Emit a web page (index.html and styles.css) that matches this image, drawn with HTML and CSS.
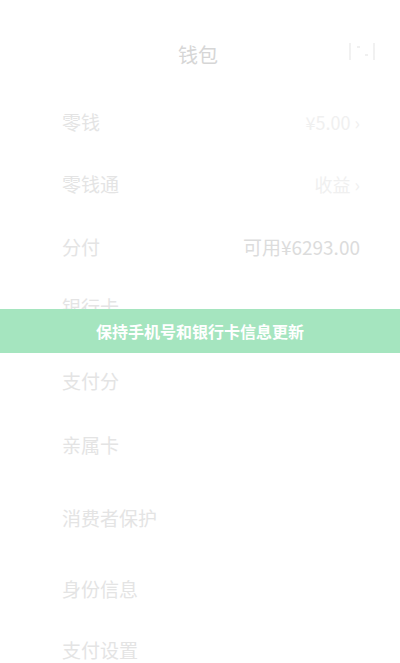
FILE: index.html
```html
<!DOCTYPE html>
<html lang="zh">
<head>
<meta charset="utf-8">
<link rel="stylesheet" href="styles.css">
</head>
<body>
<div class="page">
  <header class="topbar">
    <span class="title">钱包</span>
    <span class="more">
      <svg width="32" height="22" viewBox="0 0 32 22"><path d="M4 3v17M28 3v17M11 7h3M19 15h3" stroke="#ececec" stroke-width="1.4" fill="none"/></svg>
    </span>
  </header>
  <ul class="list">
    <li class="row r1"><span class="label">零钱</span><span class="value">¥5.00 ›</span></li>
    <li class="row r2"><span class="label">零钱通</span><span class="value">收益 ›</span></li>
    <li class="row r3"><span class="label">分付</span><span class="value strong">可用¥6293.00</span></li>
    <li class="row r4"><span class="label">银行卡</span></li>
    <li class="row r5"><span class="label">支付分</span></li>
    <li class="row r6"><span class="label">亲属卡</span></li>
    <li class="row r7"><span class="label">消费者保护</span></li>
    <li class="row r8"><span class="label">身份信息</span></li>
    <li class="row last"><span class="label">支付设置</span></li>
  </ul>
  <div class="toast">保持手机号和银行卡信息更新</div>
</div>
</body>
</html>
```
FILE: styles.css
```css
* { box-sizing: border-box; }
html, body { margin: 0; padding: 0; background: #fff; }
body {
  width: 400px;
  height: 663px;
  overflow: hidden;
  font-family: "Noto Sans CJK SC", "Noto Sans", sans-serif;
}
.page { position: relative; width: 400px; height: 663px; overflow: hidden; }
.topbar {
  height: 109px;
  display: flex;
  justify-content: center;
  align-items: flex-start;
  padding-top: 41px;
  position: relative;
}
.title {
  font-size: 20px;
  line-height: 28px;
  color: #d6d6d6;
  margin-left: -4px;
}
.more {
  position: absolute;
  right: 22px;
  top: 40px;
  display: flex;
}
.list { list-style: none; margin: 0; padding: 0 40px 0 62px; }
.row {
  height: 63px;
  display: flex;
  justify-content: space-between;
  align-items: flex-start;
  font-size: 19px;
  line-height: 26px;
}
.row.r1 { height: 62px; }
.row.r2 { height: 63px; }
.row.r3 { height: 60px; }
.row.r4 { height: 74px; }
.row.r5 { height: 64px; }
.row.r6 { height: 73px; }
.row.r7 { height: 71px; }
.row.r8 { height: 61px; }
.row.last { height: 26px; }
.label { color: #e4e4e4; }
.value { color: #f0f0f0; font-size: 18px; }
.value.strong { color: #dcdcdc; font-size: 19px; }
.toast {
  position: absolute;
  left: 0;
  top: 309px;
  width: 400px;
  height: 44px;
  background: #a5e5bf;
  color: #fff;
  font-weight: 700;
  font-size: 16px;
  display: flex;
  align-items: center;
  justify-content: center;
}
```
